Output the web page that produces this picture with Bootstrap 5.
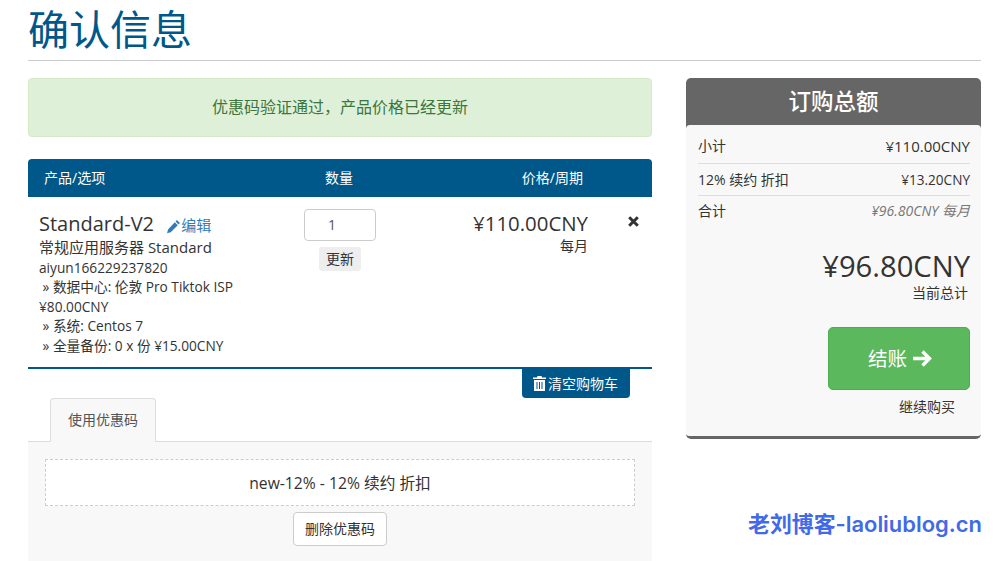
<!DOCTYPE html>
<html lang="zh-CN">
<head>
<meta charset="utf-8">
<title>确认信息</title>
<link href="https://cdn.jsdelivr.net/npm/bootstrap@5.3.0/dist/css/bootstrap.min.css" rel="stylesheet">
<style>
html,body{height:561px;overflow:hidden}
body{font-family:"Open Sans","Noto Sans CJK SC",sans-serif;font-size:14px;color:#333;background:#fff;position:relative}
.page-wrap{padding:0 26px 0 28px}
.head-title{height:61px;border-bottom:1px solid #ccc;margin:0 0 17px;font-size:41px;line-height:59px;font-weight:400;color:#00588a}
.main-col{width:624px}
.side-col{width:295px}
.ok-alert{height:59px;background:#dff0d8;border:1px solid #d6e9c6;border-radius:4px;color:#3c763d;font-size:16px;line-height:57px;text-align:center;margin-bottom:22px}
.cart-head{height:38px;background:#00588a;color:#fff;border-radius:4px 4px 0 0;line-height:38px}
.c-a{width:255px;padding-left:16px}
.c-b{width:112px;text-align:center}
.c-c{width:221px;text-align:right;padding-right:33px}
.cart-row{height:172px;border-bottom:2px solid #00588a;padding:12px 0 0 11px;line-height:19.5px;font-size:13.7px}
.item-info{width:244px}
.item-name{font-size:20px;line-height:30px;color:#333;margin-bottom:-2px}
.item-kind{font-size:15px}
.edit-link{font-size:15px;color:#337ab7;text-decoration:none;margin-left:7px}
.qty-col{width:130px;text-align:center;margin-left:-8px;font-size:14px}
.qty-box{width:72px;height:32px;border:1px solid #ccc;border-radius:4px;margin:0 auto 6px;line-height:30px;color:#555;padding-right:16px;background:#fff}
.upd-btn{display:inline-block;height:24px;width:42px;background:#eee;border-radius:3px;line-height:24px;color:#333}
.price-col{width:183px;text-align:right;padding-top:2px;font-size:14px}
.price-big{font-size:20.4px;line-height:24px}
.price-sub{line-height:20px;margin-top:1px}
.rm-col{flex:1;padding-left:40px;padding-top:4px;line-height:1}
.empty-wrap{height:29px;text-align:right;padding-right:22px}
.empty-btn{display:inline-flex;align-items:center;gap:2px;height:29px;padding:0 12px 0 11px;background:#00588a;color:#fff;border-radius:0 0 4px 4px}
.tab-bar{height:44px;border-bottom:1px solid #ddd;padding-left:22px}
.tab-one{width:106px;height:44px;background:#f8f8f8;border:1px solid #ddd;border-bottom:0;border-radius:4px 4px 0 0;line-height:42px;text-align:center;color:#555}
.tab-body{height:120px;background:#f8f8f8;padding:17px 17px 0;text-align:center}
.promo-box{height:47px;background:#fff;border:1px dashed #ccc;line-height:46px;font-size:15.7px;margin-bottom:6px}
.del-btn{display:inline-block;width:94px;height:34px;background:#fff;border:1px solid #ccc;border-radius:4px;line-height:32px;color:#333}
.sum-panel{height:361px;background:#f8f8f8;border-bottom:3px solid #666;border-radius:5px}
.sum-head{height:51px;background:#666;color:#fff;border-radius:5px 5px 0 0;font-size:22.5px;font-weight:500;line-height:47px;text-align:center}
.sum-body{position:relative;padding:5px 11px 0 12px;margin-top:-4px;background:#f8f8f8;border-radius:4px 4px 0 0}
.sum-line{height:32px;line-height:32px;border-bottom:1px solid #ddd}
.sum-line.first{height:34px}
.sum-line.last{border-bottom:0;line-height:30px}
.sum-fig{font-size:15px}
.sum-fig2{font-size:13.6px}
.sum-note{font-size:14px;font-style:italic;color:#777}
.sum-big{font-size:29.2px;line-height:34px;text-align:right;margin-top:21px}
.sum-cap{text-align:right;line-height:20px;color:#333;padding-right:2px}
.pay-btn{display:flex;align-items:center;justify-content:center;gap:6px;width:142px;height:63px;padding-left:2px;background:#5cb85c;border:1px solid #4cae4c;border-radius:5px;color:#fff;font-size:19.5px;margin:24px 0 0 auto}
.more-link{width:142px;margin:-1px 0 0 auto;line-height:36px;color:#333;padding-left:71px}
.wm-text{position:absolute;left:748px;top:511px;font-family:"Inter","Noto Sans CJK SC",sans-serif;font-size:21.9px;font-weight:600;line-height:26px;color:#4169e8;white-space:nowrap}
</style>
</head>
<body>
<div class="page-wrap">
  <h1 class="head-title">确认信息</h1>
  <div class="d-flex justify-content-between">
    <div class="main-col">
      <div class="ok-alert">优惠码验证通过，产品价格已经更新</div>
      <div class="cart-head d-flex">
        <div class="c-a">产品/选项</div>
        <div class="c-b">数量</div>
        <div class="c-c">价格/周期</div>
      </div>
      <div class="cart-row d-flex">
        <div class="item-info">
          <div class="item-name">Standard-V2 <a class="edit-link" href="#"><svg width="15" height="15" viewBox="0 0 14 14" fill="#337ab7"><path d="M10.2 1 13 3.8l-1.3 1.3-2.8-2.8zM8.2 3l2.8 2.8-6.6 6.6L1 13.4l.9-3.5z"/></svg>编辑</a></div>
          <div class="item-kind">常规应用服务器 Standard</div>
          <div class="text-nowrap">aiyun166229237820</div>
          <div>&nbsp;» 数据中心: 伦敦 Pro Tiktok ISP</div>
          <div>¥80.00CNY</div>
          <div>&nbsp;» 系统: Centos 7</div>
          <div>&nbsp;» 全量备份: 0 x 份 ¥15.00CNY</div>
        </div>
        <div class="qty-col">
          <div class="qty-box">1</div>
          <span class="upd-btn">更新</span>
        </div>
        <div class="price-col">
          <div class="price-big">¥110.00CNY</div>
          <div class="price-sub">每月</div>
        </div>
        <div class="rm-col"><svg width="11" height="11" viewBox="0 0 11 11" fill="none" stroke="#333" stroke-width="3"><path d="M1.2 1.2l8.6 8.6M9.8 1.2 1.2 9.8"/></svg></div>
      </div>
      <div class="empty-wrap">
        <span class="empty-btn"><svg width="13" height="15" viewBox="0 0 13 15" fill="#fff"><path d="M4.5 0h4l.6 1.5H13V3H0V1.5h3.9zM1 4h11v11H1zM3.5 6v7h1V6zm2.5 0v7h1V6zm2.5 0v7h1V6z" fill-rule="evenodd"/></svg>清空购物车</span>
      </div>
      <div class="tab-bar"><div class="tab-one">使用优惠码</div></div>
      <div class="tab-body">
        <div class="promo-box">new-12% - 12% 续约 折扣</div>
        <span class="del-btn">删除优惠码</span>
      </div>
    </div>
    <div class="side-col">
      <div class="sum-panel">
        <div class="sum-head">订购总额</div>
        <div class="sum-body">
          <div class="sum-line first d-flex justify-content-between"><span>小计</span><span class="sum-fig">¥110.00CNY</span></div>
          <div class="sum-line d-flex justify-content-between"><span>12% 续约 折扣</span><span class="sum-fig2">¥13.20CNY</span></div>
          <div class="sum-line last d-flex justify-content-between"><span>合计</span><span class="sum-note">¥96.80CNY 每月</span></div>
          <div class="sum-big">¥96.80CNY</div>
          <div class="sum-cap">当前总计</div>
          <div class="pay-btn">结账 <svg width="19" height="17" viewBox="0 0 19 17" fill="none" stroke="#fff" stroke-width="3.4"><path d="M0 8.5h15.5M9.5 1.5l7 7-7 7"/></svg></div>
          <div class="more-link">继续购买</div>
        </div>
      </div>
    </div>
  </div>
</div>
<div class="wm-text">老刘博客-laoliublog.cn</div>
<script src="https://cdn.jsdelivr.net/npm/bootstrap@5.3.0/dist/js/bootstrap.bundle.min.js"></script>
</body>
</html>
